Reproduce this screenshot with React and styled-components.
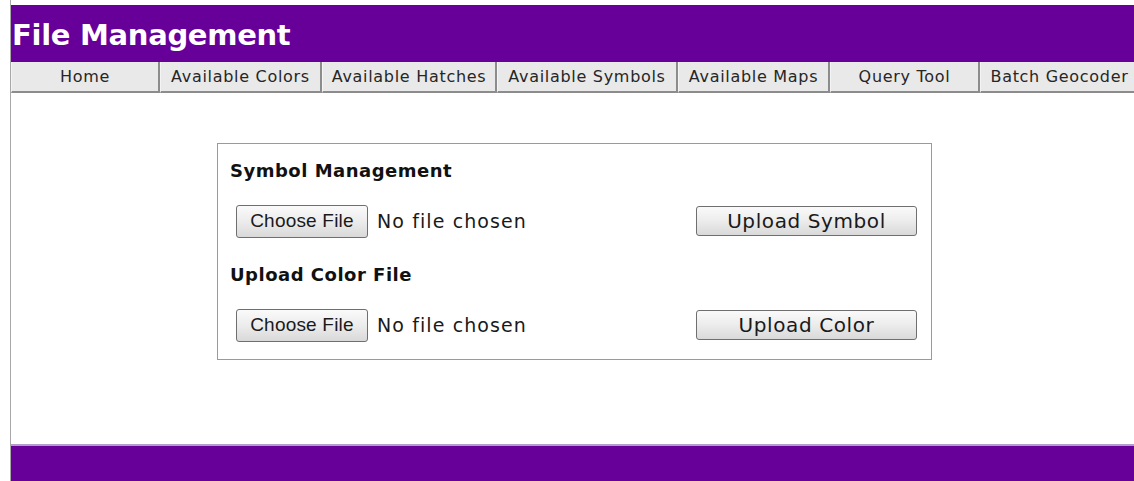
import styled, { createGlobalStyle } from "styled-components";

const GlobalStyle = createGlobalStyle`
  html, body {
    margin: 0;
    padding: 0;
    background: #ffffff;
  }
  body {
    font-family: "DejaVu Sans", Verdana, sans-serif;
  }
`;

const purple = "#660099";

const Page = styled.div`
  margin-left: 10px;
  padding-top: 5px;
  border-left: 1px solid #a8a8a8;
  min-height: 476px;
  display: flex;
  flex-direction: column;
  overflow: hidden;
`;

const Header = styled.header`
  background: ${purple};
  height: 57px;
  display: flex;
  align-items: center;
  padding-left: 1px;
`;

const Title = styled.h1`
  margin: 0;
  color: #ffffff;
  font-family: "DejaVu Sans", Verdana, sans-serif;
  font-size: 29px;
  font-weight: bold;
  letter-spacing: -0.3px;
  padding-top: 2px;
`;

const NavBar = styled.nav`
  display: flex;
  height: 31px;
  white-space: nowrap;
`;

const Tab = styled.a`
  flex: 0 0 auto;
  width: ${(p) => p.$width}px;
  box-sizing: border-box;
  background: #e9e9e9;
  border-right: 2px solid #8c8c8c;
  border-bottom: 2px solid #8c8c8c;
  border-left: 1px solid #f4f4f4;
  display: flex;
  align-items: center;
  justify-content: center;
  font-size: 16px;
  letter-spacing: 0.7px;
  color: #262626;
  text-decoration: none;
  cursor: pointer;
`;

const Main = styled.main`
  flex: 0 0 auto;
  padding: 50px 0 0 206px;
  height: 351px;
  box-sizing: border-box;
`;

const UploadBox = styled.section`
  width: 715px;
  height: 217px;
  box-sizing: border-box;
  border: 1px solid #9a9a9a;
  padding: 12px 14px 0 12px;
`;

const SectionTitle = styled.h3`
  margin: 0;
  height: 28px;
  display: flex;
  align-items: center;
  font-size: 18px;
  font-weight: bold;
  color: #111;
  letter-spacing: 0.5px;
`;

const UploadRow = styled.div`
  display: flex;
  align-items: center;
  justify-content: space-between;
  height: 48px;
  margin: 13px 0 15px 6px;
`;

const FilePicker = styled.label`
  display: flex;
  align-items: center;
  gap: 9px;
`;

const GreyButton = styled.button`
  box-sizing: border-box;
  height: ${(p) => (p.$wide ? 30 : 33)}px;
  width: ${(p) => (p.$wide ? 221 : 132)}px;
  border: 1px solid #6f6f6f;
  border-radius: 3px;
  background: linear-gradient(#fafafa, #ececec 50%, #d9d9d9);
  font-family: ${(p) =>
    p.$wide ? `"DejaVu Sans", Verdana, sans-serif` : `"Liberation Sans", Arial, sans-serif`};
  font-size: ${(p) => (p.$wide ? 20 : 19)}px;
  letter-spacing: ${(p) => (p.$wide ? 0.6 : 0.2)}px;
  color: #1a1a1a;
  padding: 0;
  cursor: pointer;
`;

const FileStatus = styled.span`
  font-size: 19px;
  letter-spacing: 1.1px;
  color: #1a1a1a;
`;

const Footer = styled.footer`
  flex: 1;
  background: ${purple};
  border-top: 2px solid #b49bcc;
`;

const tabs = [
  { label: "Home", width: 149 },
  { label: "Available Colors", width: 162 },
  { label: "Available Hatches", width: 175 },
  { label: "Available Symbols", width: 181 },
  { label: "Available Maps", width: 152 },
  { label: "Query Tool", width: 150 },
  { label: "Batch Geocoder", width: 160 },
];

const uploads = [
  { title: "Symbol Management", action: "Upload Symbol" },
  { title: "Upload Color File", action: "Upload Color" },
];

export default function App() {
  return (
    <>
      <GlobalStyle />
      <Page>
        <Header>
          <Title>File Management</Title>
        </Header>
        <NavBar>
          {tabs.map((t) => (
            <Tab key={t.label} $width={t.width}>
              {t.label}
            </Tab>
          ))}
        </NavBar>
        <Main>
          <UploadBox>
            {uploads.map((u) => (
              <div key={u.title}>
                <SectionTitle>{u.title}</SectionTitle>
                <UploadRow>
                  <FilePicker>
                    <GreyButton type="button">Choose File</GreyButton>
                    <FileStatus>No file chosen</FileStatus>
                  </FilePicker>
                  <GreyButton type="button" $wide>
                    {u.action}
                  </GreyButton>
                </UploadRow>
              </div>
            ))}
          </UploadBox>
        </Main>
        <Footer />
      </Page>
    </>
  );
}
